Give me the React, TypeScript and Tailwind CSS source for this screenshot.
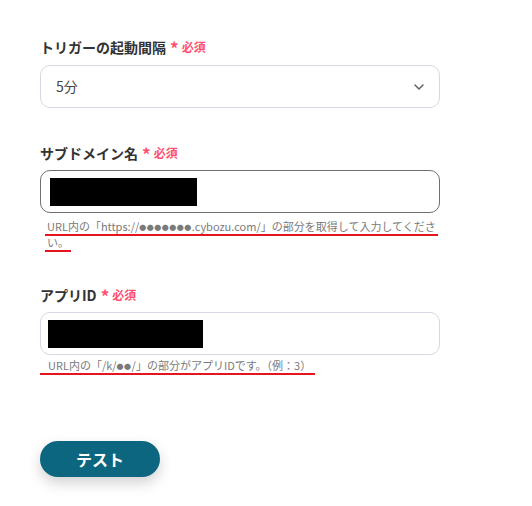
const Required = () => (
  <span className="ml-[4px] inline-flex items-center text-[12px] font-bold text-[#ff4f6f]">
    <span className="mr-[3px] text-[17px] leading-none">*</span>
    必須
  </span>
);

const Label = ({ children }: { children: string }) => (
  <div className="flex items-center h-[20px] text-[14px] font-bold text-[#333]">
    {children}
    <Required />
  </div>
);

const Masked = ({ w }: { w: string }) => <div className={`h-[28px] bg-black ${w}`} />;

const Dots = ({ n }: { n: number }) => (
  <span className="text-[7px] tracking-[0.5px] align-[1px]">{'●'.repeat(n)}</span>
);

const App = () => {
  return (
    <div
      className="w-[532px] h-[506px] bg-white pl-[40px] pt-[37px]"
      style={{ fontFamily: '"Noto Sans CJK JP", "Noto Sans", sans-serif' }}
    >
      <div className="w-[400px]">
        <Label>トリガーの起動間隔</Label>
        <div className="mt-[8px] flex h-[43px] items-center justify-between rounded-[10px] border border-[#d8d8e2] pl-[15px] pr-[14px] text-[14px] text-[#444]">
          <span>5分</span>
          <svg width="12" height="12" viewBox="0 0 12 12" fill="none">
            <path d="M2 4l4 4 4-4" stroke="#666" strokeWidth="1.6" strokeLinecap="round" strokeLinejoin="round" />
          </svg>
        </div>

        <div className="mt-[35px]">
          <Label>サブドメイン名</Label>
        </div>
        <div className="mt-[7px] flex h-[43px] items-center rounded-[10px] border border-[#707070] pl-[9px]">
          <Masked w="w-[147px]" />
        </div>
        <p className="mt-[6px] w-[400px] pl-[5px] text-[11px] leading-[15px] text-[#7a7a7a]">
          <span className="box-decoration-clone border-b-2 border-[#e5141e] px-[2px]">
            URL内の「https://<Dots n={7} />.cybozu.com/」の部分を取得して入力してください。
          </span>
        </p>

        <div className="mt-[35px]">
          <Label>アプリID</Label>
        </div>
        <div className="mt-[7px] flex h-[43px] items-center rounded-[10px] border border-[#d8d8e2] pl-[7px]">
          <Masked w="w-[155px]" />
        </div>
        <p className="mt-[3px] text-[11px] leading-[15px] text-[#7a7a7a]">
          <span className="border-b-2 border-[#e5141e] pl-[8px] pr-[4px]">
            URL内の「/k/<Dots n={2} />/」の部分がアプリIDです。（例：3）
          </span>
        </p>

        <button className="mt-[67px] flex h-[36px] w-[120px] items-center justify-center rounded-full bg-[#0d6680] text-[16px] font-bold text-white shadow-[0_6px_14px_rgba(0,0,0,0.18)]">
          テスト
        </button>
      </div>
    </div>
  );
};

export default App;
